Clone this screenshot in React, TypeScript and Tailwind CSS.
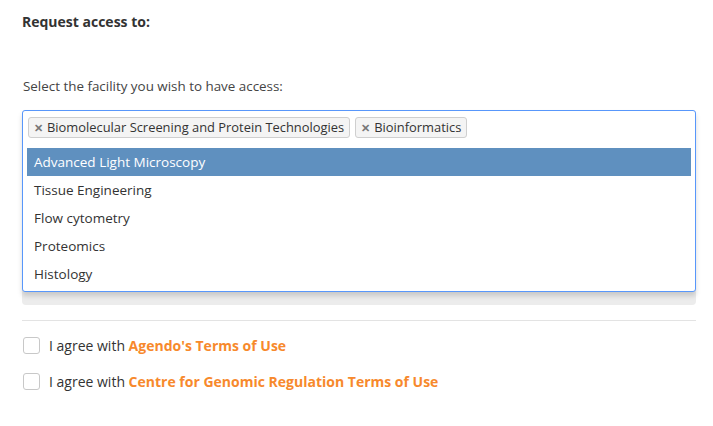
import React from "react";

const options = [
  "Advanced Light Microscopy",
  "Tissue Engineering",
  "Flow cytometry",
  "Proteomics",
  "Histology",
];

function Tag({ label }: { label: string }) {
  return (
    <div className="flex h-[21px] items-center rounded-[3px] border border-[#cfcfcf] bg-[#f4f4f4] pl-[5px] pr-[5px] text-[12.9px] leading-none text-[#333]">
      <span className="mr-[4px] text-[11px] font-bold text-[#777]">✕</span>
      <span>{label}</span>
    </div>
  );
}

export default function App() {
  return (
    <div
      className="h-[426px] w-[713px] bg-white pl-[22px] pr-[17px] text-[#333]"
      style={{ fontFamily: '"Open Sans", "Liberation Sans", sans-serif' }}
    >
      <div className="pt-[13px] text-[14px] font-bold leading-[18px] text-[#333]">Request access to:</div>
      <div className="mt-[46px] pl-[1px] text-[13.4px] leading-[18px] text-[#444]">
        Select the facility you wish to have access:
      </div>
      <div className="mt-[15px] rounded-[4px] bg-[#ececec] pb-[13px]">
        <div className="rounded-[3px] border border-[#5897fb] bg-white pb-[3px] shadow-[0_4px_5px_rgba(0,0,0,0.15)]">
          <div className="flex gap-[5px] pl-[5px] pt-[6px]">
            <Tag label="Biomolecular Screening and Protein Technologies" />
            <Tag label="Bioinformatics" />
          </div>
          <ul className="mx-[4px] mt-[10px]">
            {options.map((o, i) => (
              <li
                key={o}
                className={
                  i === 0
                    ? "flex h-[28px] items-center bg-[#5f90bf] pl-[7px] text-[13.5px] text-white"
                    : "flex h-[28px] items-center pl-[7px] text-[13.5px] text-[#333]"
                }
              >
                {o}
              </li>
            ))}
          </ul>
        </div>
      </div>
      <div className="mt-[15px] h-px bg-[#e3e3e3]" />
      <div className="mt-[16px] flex flex-col gap-[19px] pl-[1px]">
        <label className="flex h-[17px] items-center gap-[9px] text-[14px]">
          <span className="h-[17px] w-[17px] rounded-[3px] border border-[#c8c8c8] bg-white" />
          <span className="text-[#333]">
            I agree with <span className="font-bold text-[#f7892c]">Agendo's Terms of Use</span>
          </span>
        </label>
        <label className="flex h-[17px] items-center gap-[9px] text-[14px]">
          <span className="h-[17px] w-[17px] rounded-[3px] border border-[#c8c8c8] bg-white" />
          <span className="text-[#333]">
            I agree with{" "}
            <span className="font-bold text-[#f7892c]">Centre for Genomic Regulation Terms of Use</span>
          </span>
        </label>
      </div>
    </div>
  );
}
